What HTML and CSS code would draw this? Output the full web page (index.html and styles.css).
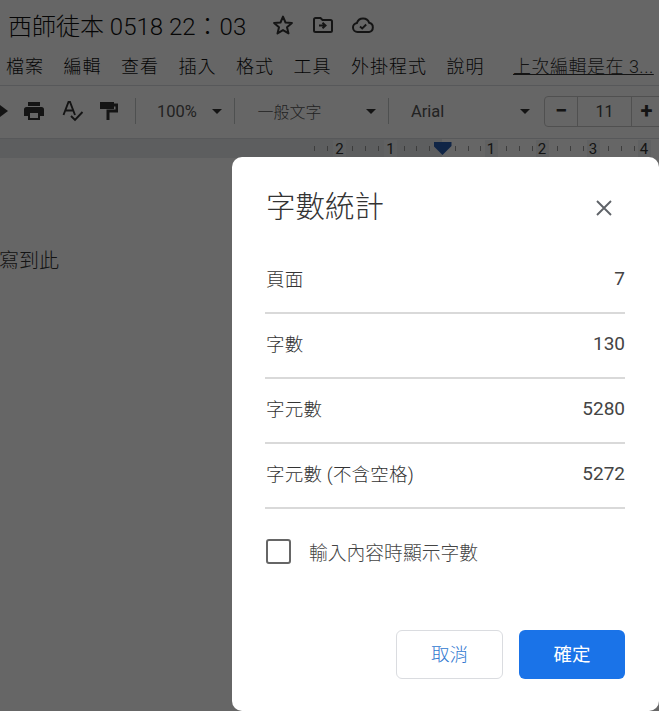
FILE: index.html
```html
<!DOCTYPE html>
<html lang="zh-Hant">
<head>
<meta charset="utf-8">
<title>字數統計</title>
<link rel="stylesheet" href="styles.css">
</head>
<body>
<div class="app">
  <div class="title-row">
    <span class="doc-title">西師徒本 0518 22：03</span>
    <svg class="t-ico star" viewBox="0 0 24 24"><path d="M12 3.600l2.500 5.900 6.400.5-4.900 4.200 1.500 6.200-5.500-3.300-5.500 3.300 1.500-6.200-4.900-4.200 6.400-.5z" fill="none" stroke="#333" stroke-width="2" stroke-linejoin="round"/></svg>
    <svg class="t-ico" viewBox="0 0 24 24"><path d="M3 6.500a1.500 1.500 0 0 1 1.500-1.500h5l2 2h8A1.500 1.500 0 0 1 21 8.500v9a1.500 1.500 0 0 1-1.500 1.500h-15A1.500 1.500 0 0 1 3 17.500z" fill="none" stroke="#333" stroke-width="2"/><path d="M8 12.500h5M11.500 9.800l3 2.700-3 2.700" fill="none" stroke="#333" stroke-width="2"/></svg>
    <svg class="t-ico" viewBox="0 0 24 24"><path d="M6.500 19a4.500 4.500 0 0 1-.6-8.960A6.500 6.500 0 0 1 18.200 9.800 4.700 4.700 0 0 1 18 19z" fill="none" stroke="#333" stroke-width="2"/><path d="M9 13.500l2.200 2 4-4" fill="none" stroke="#333" stroke-width="1.800"/></svg>
  </div>
  <nav class="menu-row">
    <span class="menu-item">檔案</span>
    <span class="menu-item">編輯</span>
    <span class="menu-item">查看</span>
    <span class="menu-item">插入</span>
    <span class="menu-item">格式</span>
    <span class="menu-item">工具</span>
    <span class="menu-item">外掛程式</span>
    <span class="menu-item">說明</span>
    <span class="last-edit">上次編輯是在 3...</span>
  </nav>
  <div class="toolbar">
    <svg class="tool cut" viewBox="0 0 8 24"><path d="M0 6l8 6-8 6z" fill="#333"/></svg>
    <svg class="tool" viewBox="0 0 24 24"><path d="M6 3h12v4H6zM4.500 8h15A2.500 2.500 0 0 1 22 10.500V17h-4v4H6v-4H2v-6.500A2.500 2.500 0 0 1 4.500 8zM8 14v5h8v-5z" fill="#333" fill-rule="evenodd"/></svg>
    <svg class="tool spell" viewBox="0 0 24 24"><path d="M3.500 16L8.500 3h1.500l5 13M5.500 11.500h7.500" fill="none" stroke="#333" stroke-width="1.900"/><path d="M11 17l4 4 7.500-8" fill="none" stroke="#333" stroke-width="1.900"/></svg>
    <svg class="tool paint" viewBox="0 0 18 18"><path d="M0 0h14v7H0z" fill="#333"/><path d="M14 3h3v6H8v9" fill="none" stroke="#333" stroke-width="3"/></svg>
    <i class="sep"></i>
    <span class="tb-text zoom">100%</span><i class="caret"></i>
    <i class="sep"></i>
    <span class="tb-text style">一般文字</span><i class="caret"></i>
    <i class="sep"></i>
    <span class="tb-text font">Arial</span><i class="caret"></i>
    <div class="size-box">
      <span class="size-btn">−</span>
      <span class="size-val">11</span>
      <span class="size-btn plus">+</span>
    </div>
  </div>
  <div class="ruler">
    <div class="ruler-margin"></div>
    <div class="ruler-ticks"></div>
    <div class="ruler-nums">
      <span class="n">2</span><span class="n">1</span><span class="marker"></span><span class="n">1</span><span class="n">2</span><span class="n">3</span><span class="n">4</span>
    </div>
  </div>
  <div class="doc"><p class="doc-text">寫到此</p></div>
</div>
<div class="backdrop"></div>
<section class="dialog">
  <header class="dialog-head">
    <h1 class="dialog-title">字數統計</h1>
    <svg class="close" viewBox="0 0 16 16"><path d="M1 1l14 14M15 1L1 15" stroke="#5f6368" stroke-width="1.900" fill="none"/></svg>
  </header>
  <div class="stat"><span class="label">頁面</span><span class="num">7</span></div>
  <div class="stat"><span class="label">字數</span><span class="num">130</span></div>
  <div class="stat"><span class="label">字元數</span><span class="num">5280</span></div>
  <div class="stat"><span class="label">字元數 (不含空格)</span><span class="num">5272</span></div>
  <label class="check-row"><i class="check"></i><span>輸入內容時顯示字數</span></label>
  <footer class="actions">
    <button class="btn cancel">取消</button>
    <button class="btn ok">確定</button>
  </footer>
</section>
</body>
</html>
```
FILE: styles.css
```css
* { box-sizing: border-box; }
html, body { margin: 0; height: 100%; }
body {
  width: 659px;
  height: 711px;
  overflow: hidden;
  position: relative;
  background: #fff;
  font-family: Roboto, "Noto Sans CJK TC", sans-serif;
  color: #202124;
}
.app { display: flex; flex-direction: column; height: 711px; }
.title-row { height: 52px; display: flex; align-items: center; padding: 0 0 3px 8px; }
.doc-title { font-size: 24px; font-weight: 300; color: #111; white-space: nowrap; width: 264px; }
.t-ico { width: 24px; height: 24px; margin-right: 16px; }
.t-ico.star { margin-left: -1px; }
.menu-row { height: 33px; display: flex; align-items: center; padding: 0 0 8px 6px; font-size: 18px; font-weight: 300; white-space: nowrap; color: #111; }
.menu-item { margin-right: 19.500px; letter-spacing: 1px; }
.last-edit { margin-left: 9px; text-decoration: underline; color: #333; letter-spacing: .5px; }
.toolbar {
  height: 54px;
  display: flex;
  align-items: center;
  border-top: 1px solid #dadce0;
  border-bottom: 1px solid #dadce0;
  color: #444;
  white-space: nowrap;
  padding-bottom: 2px;
}
.tool { width: 24px; height: 24px; margin-right: 15px; flex: none; }
.tool.cut { width: 8px; margin-right: 14px; }
.tool.spell { margin-right: 16px; margin-left: -1px; }
.tool.paint { width: 18px; height: 18px; margin-right: 17px; }
.sep { width: 1px; height: 26px; background: #c4c7c9; flex: none; }
.tb-text { font-size: 16px; color: #555; flex: none; }
.zoom { margin-left: 21px; width: 54.500px; font-size: 16.500px; }
.style { margin-left: 23px; width: 108.500px; font-weight: 300; }
.font { margin-left: 22px; width: 108.500px; font-size: 16.500px; }
.caret { width: 0; height: 0; border-left: 5.500px solid transparent; border-right: 5.500px solid transparent; border-top: 5.500px solid #333; flex: none; margin-right: 12px; }
.size-box {
  margin-left: 2.500px;
  width: 130px;
  height: 31px;
  border: 1px solid #c8c8c8;
  border-radius: 4px;
  display: flex;
  align-items: center;
  flex: none;
}
.size-btn { width: 32px; text-align: center; font-size: 22px; line-height: 28px; font-weight: 700; color: #333; }
.size-val { width: 55px; height: 100%; text-align: center; line-height: 30px; font-size: 16px; color: #444; border-left: 1px solid #c8c8c8; border-right: 1px solid #c8c8c8; }
.size-btn.plus { width: 29px; }
.ruler { height: 19px; background: #fff; position: relative; flex: none; }
.ruler-margin { position: absolute; left: 0; top: 0; bottom: 0; width: 442px; background: #e8eaed; }
.ruler-ticks {
  position: absolute;
  left: 314px;
  right: 0;
  top: 7px;
  height: 5px;
  background: repeating-linear-gradient(to right, #999 0 1px, transparent 1px 12.800px);
}
.ruler-nums { position: absolute; left: 333px; top: 0; bottom: 0; display: flex; align-items: center; font-size: 15px; color: #333; }
.n { width: 13px; margin-right: 38px; text-align: center; background: #f1f3f4; }
.marker { width: 18px; height: 13px; margin: 0 33px 0 -1.500px; background: #2a5db0; clip-path: polygon(0 0,100% 0,100% 30%,50% 100%,0 30%); }
.doc { flex: 1; background: #fff; }
.doc-text { margin: 89px 0 0 -1px; font-size: 20px; font-weight: 300; line-height: 28px; color: #333; }
.backdrop { position: absolute; inset: 0; background: rgba(0,0,0,.6); }
.dialog {
  position: absolute;
  left: 232px;
  top: 157px;
  width: 427px;
  height: 554px;
  background: #fff;
  border-radius: 10px;
  padding: 0 34px 0 33px;
  color: #444;
}
.dialog-head { height: 92px; display: flex; justify-content: space-between; align-items: center; padding: 9px 0 5px 0; }
.dialog-title { margin: 0 0 2px 1px; font-size: 29.500px; font-weight: 300; color: #333; }
.close { width: 16px; height: 16px; margin-right: 13px; margin-top: 6px; }
.stat {
  height: 65px;
  display: flex;
  justify-content: space-between;
  align-items: center;
  padding: 0 0 5px 1px;
  font-size: 18.500px;
  border-bottom: 2px solid #d9d9d9;
}
.label { font-weight: 300; color: #333; letter-spacing: .2px; }
.num { font-size: 19px; color: #444; }
.check-row { display: flex; align-items: center; margin-top: 27px; height: 30px; font-size: 18.800px; font-weight: 300; color: #444; padding-left: 1px; }
.check { width: 25px; height: 25px; border: 2px solid #666; border-radius: 3px; margin-right: 18px; }
.actions { display: flex; justify-content: flex-end; gap: 16px; margin-top: 64px; }
.btn { height: 49px; border-radius: 6px; font-family: inherit; font-size: 18.500px; padding: 0 0 4px; }
.cancel { width: 107px; background: #fff; border: 1px solid #dadce0; color: #2f78d0; font-weight: 300; }
.ok { width: 106px; background: #1a73e8; border: 0; color: #fff; }
```
